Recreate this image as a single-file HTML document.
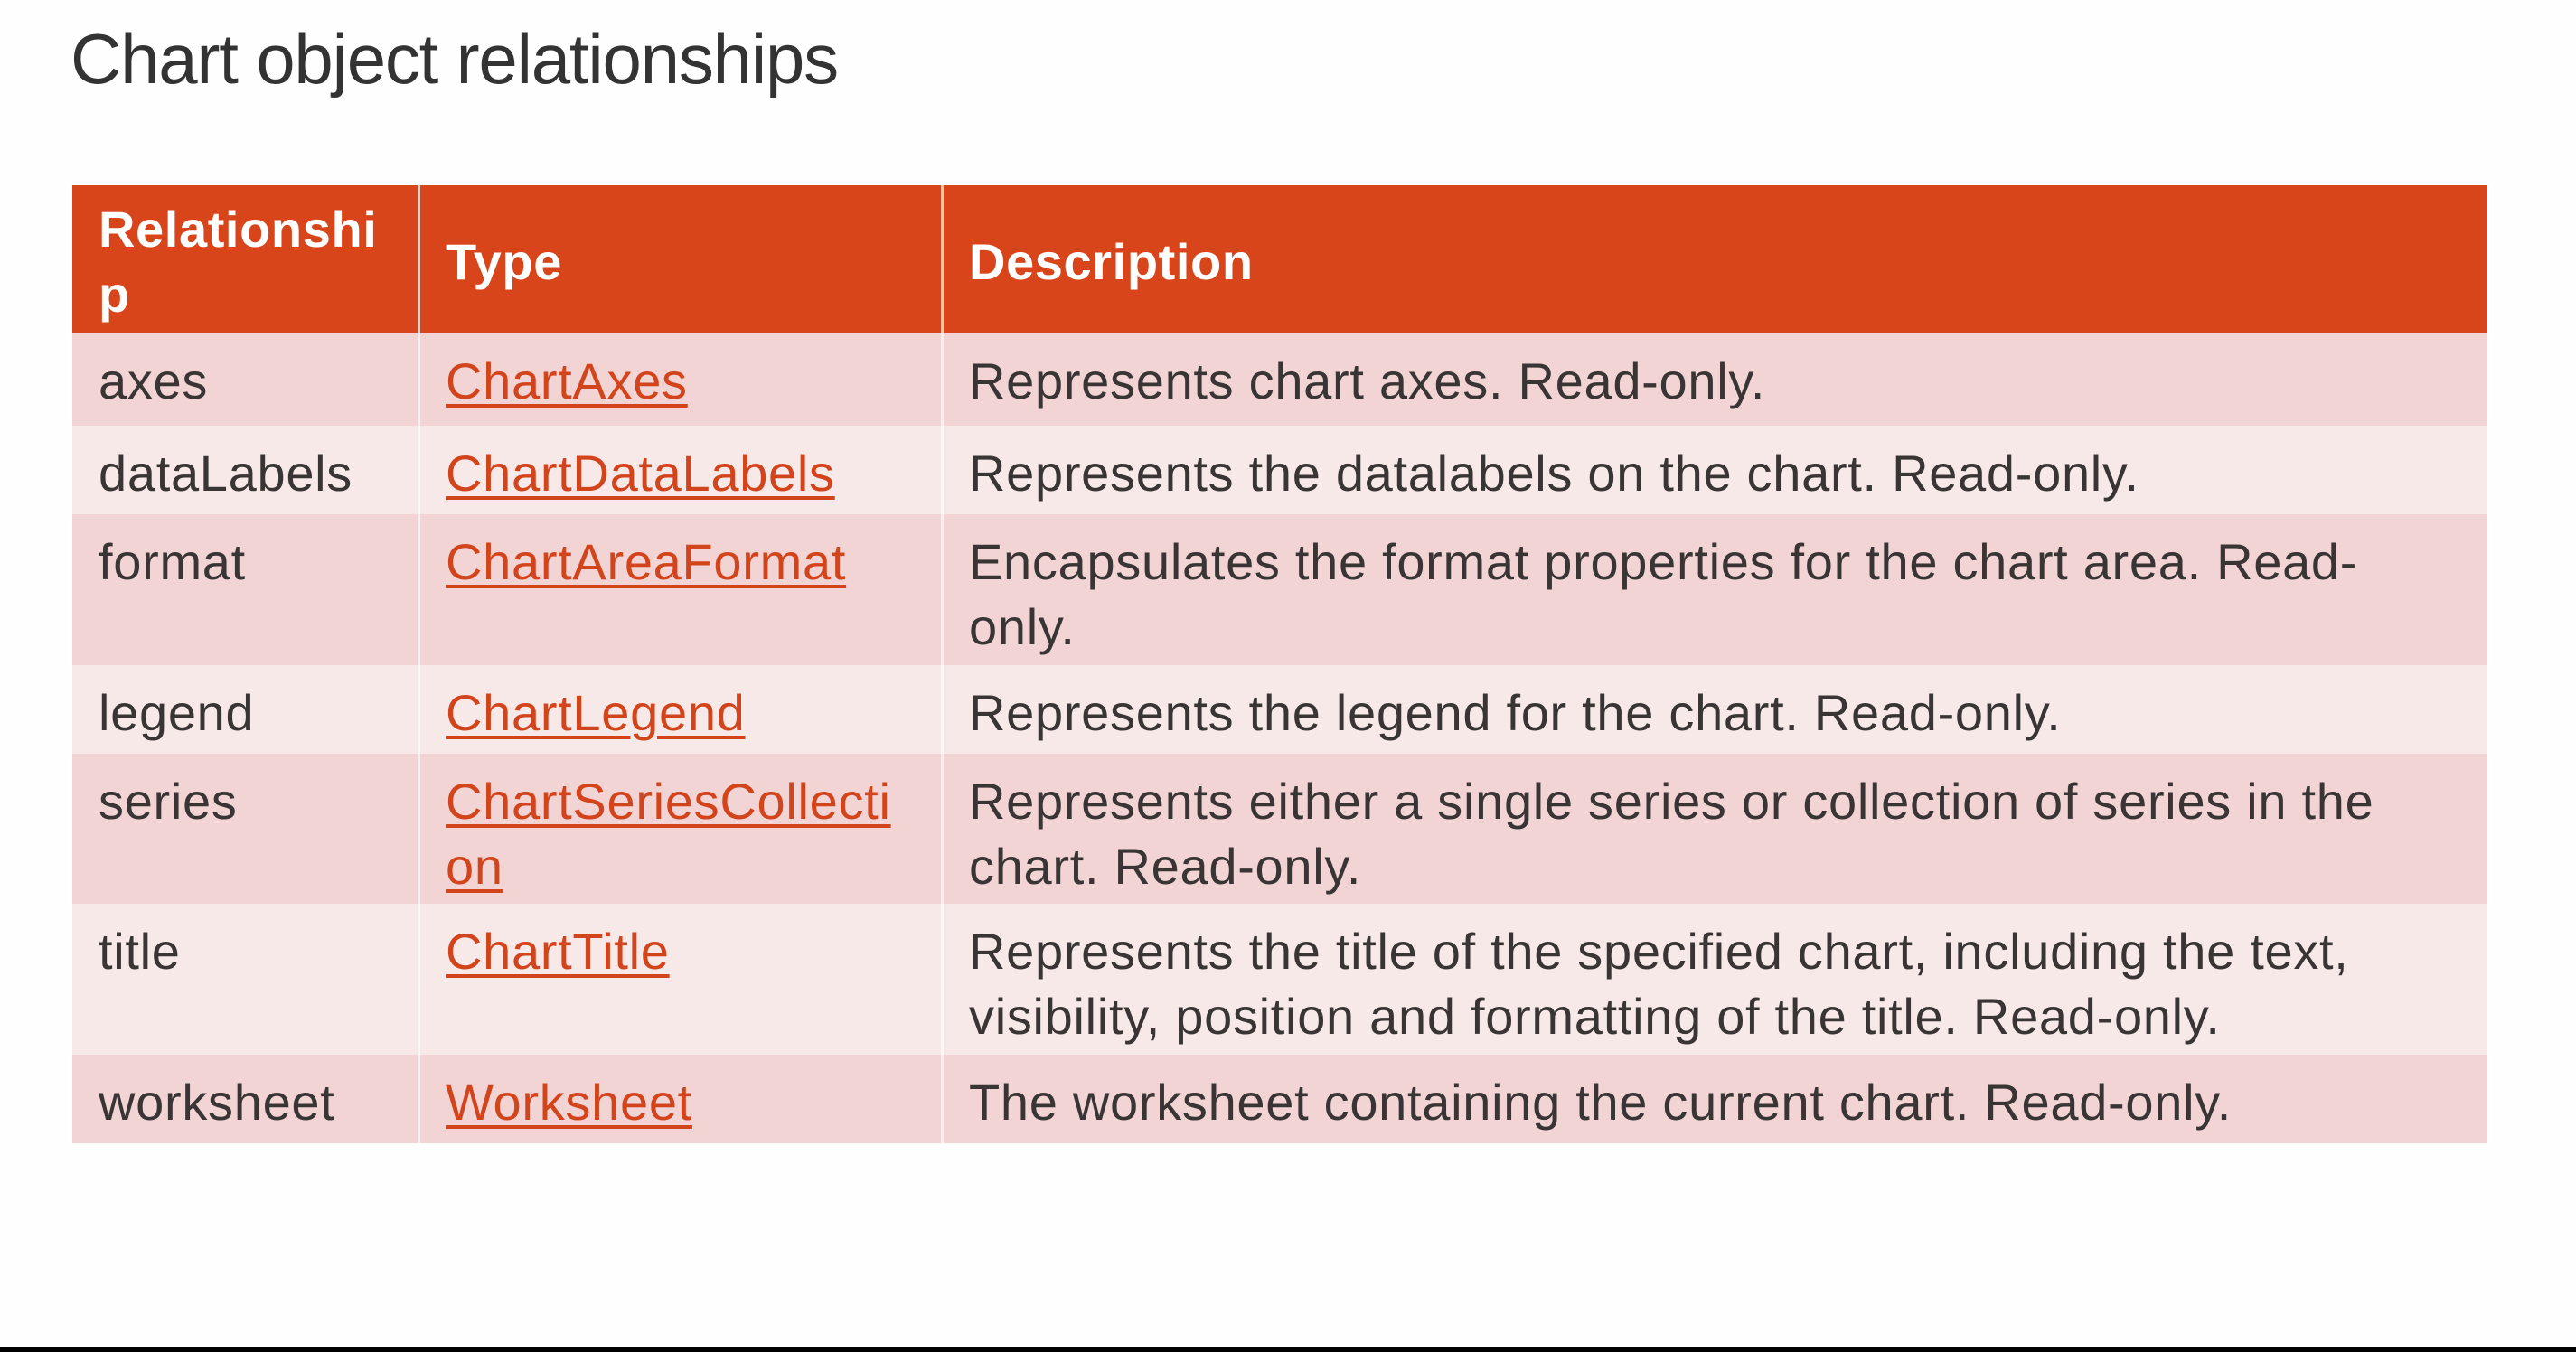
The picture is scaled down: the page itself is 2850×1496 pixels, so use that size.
<!DOCTYPE html>
<html><head><meta charset="utf-8"><style>
*{margin:0;padding:0;box-sizing:border-box}
body{width:2850px;height:1496px;background:#fefefe;position:relative;overflow:hidden;font-family:"Liberation Sans",sans-serif;color:#3a3535}
.title{position:absolute;left:78px;top:20px;font-size:78px;letter-spacing:-1.2px;color:#333;line-height:90px;white-space:nowrap}
.bar{position:absolute;left:0;top:1490px;width:2850px;height:6px;background:#000}
.row{position:absolute;left:80px;width:2672px}
.c{position:absolute;top:0;height:100%;font-size:56px;line-height:72px;padding-top:17px;letter-spacing:0.7px;white-space:nowrap}
.c1{left:0;width:382px;padding-left:29px}
.c2{left:382px;width:579px;padding-left:28px;border-left:3px solid rgba(255,255,255,.6)}
.c3{left:961px;width:1711px;padding-left:28px;border-left:3px solid rgba(255,255,255,.6)}
.h{background:#d8451a;color:#fff;font-weight:bold}
.h .c{border-left-color:#f3c9b9;letter-spacing:0.6px}
.o{background:#f2d4d4}
.e{background:#f8e9e9}
a{color:#d2451c;text-decoration:underline;text-decoration-thickness:4px;text-underline-offset:6px}
</style></head><body>
<div class="title">Chart object relationships</div>

<div class="row h" style="top:205px;height:164px">
<div class="c c1" style="padding-top:13px">Relationshi<br>p</div>
<div class="c c2" style="padding-top:49px">Type</div>
<div class="c c3" style="padding-top:49px">Description</div>
</div>

<div class="row o" style="top:369px;height:102px">
<div class="c c1">axes</div><div class="c c2"><a>ChartAxes</a></div><div class="c c3">Represents chart axes. Read-only.</div></div>

<div class="row e" style="top:471px;height:98px">
<div class="c c1">dataLabels</div><div class="c c2"><a>ChartDataLabels</a></div><div class="c c3">Represents the datalabels on the chart. Read-only.</div></div>

<div class="row o" style="top:569px;height:167px">
<div class="c c1">format</div><div class="c c2"><a>ChartAreaFormat</a></div><div class="c c3">Encapsulates the format properties for the chart area. Read-<br>only.</div></div>

<div class="row e" style="top:736px;height:98px">
<div class="c c1">legend</div><div class="c c2"><a>ChartLegend</a></div><div class="c c3">Represents the legend for the chart. Read-only.</div></div>

<div class="row o" style="top:834px;height:166px">
<div class="c c1">series</div><div class="c c2"><a>ChartSeriesCollecti</a><br><a>on</a></div><div class="c c3">Represents either a single series or collection of series in the<br>chart. Read-only.</div></div>

<div class="row e" style="top:1000px;height:167px">
<div class="c c1">title</div><div class="c c2"><a>ChartTitle</a></div><div class="c c3">Represents the title of the specified chart, including the text,<br>visibility, position and formatting of the title. Read-only.</div></div>

<div class="row o" style="top:1167px;height:98px">
<div class="c c1">worksheet</div><div class="c c2"><a>Worksheet</a></div><div class="c c3">The worksheet containing the current chart. Read-only.</div></div>

<div class="bar"></div>
</body></html>
